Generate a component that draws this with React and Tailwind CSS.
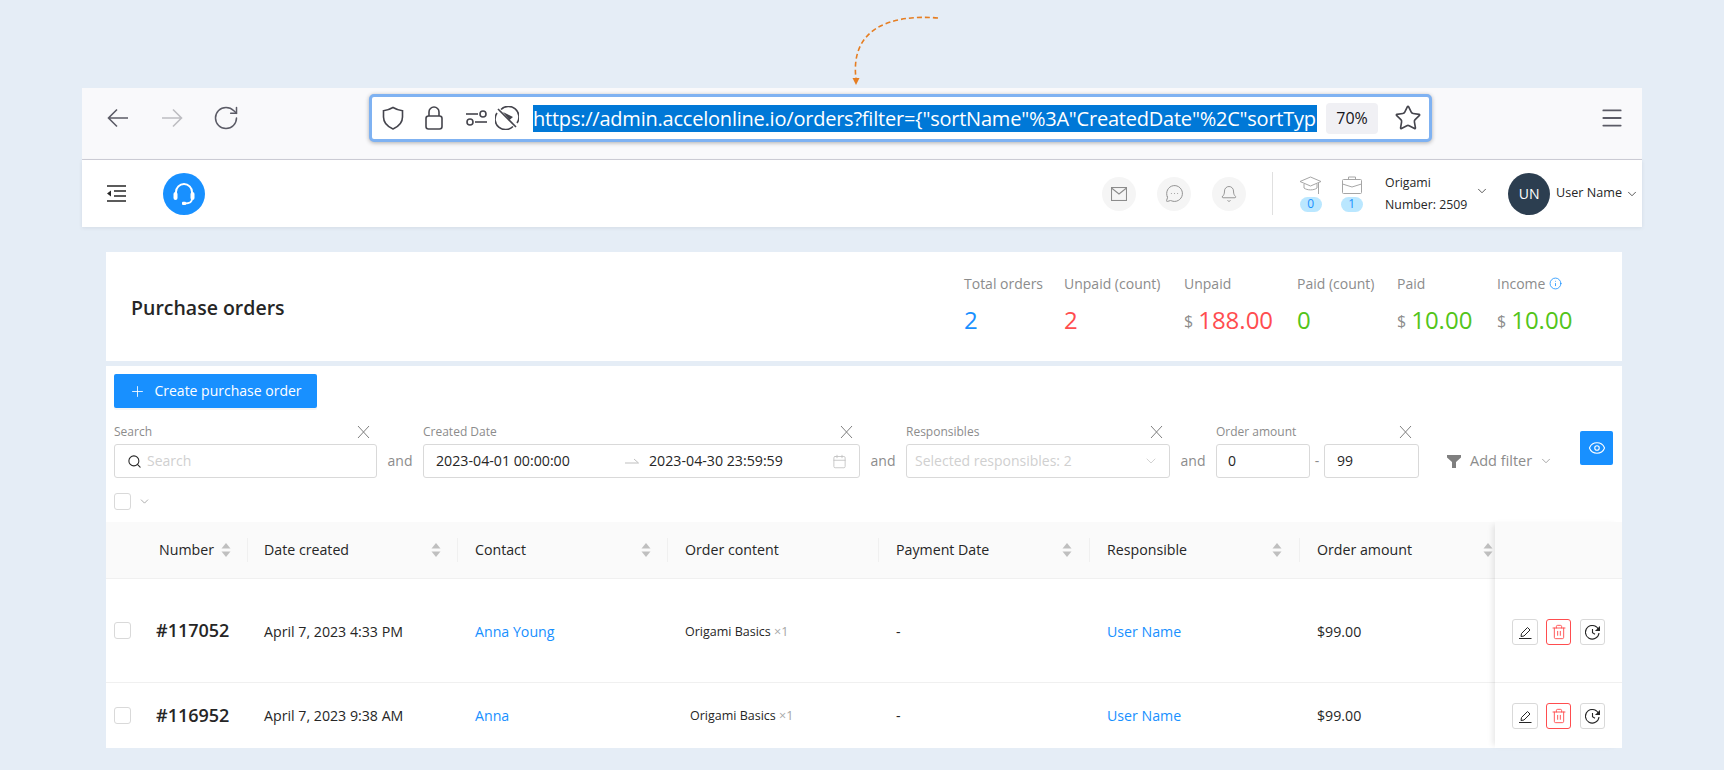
import React from 'react';
import { RotateCw, Star, Search, Calendar, ChevronDown, Plus, Info, Eye, Bell, MessageCircleMore, Menu, Trash2 } from 'lucide-react';

const url = 'https://admin.accelonline.io/orders?filter={"sortName"%3A"CreatedDate"%2C"sortTyp';

const stats = [
  { label: 'Total orders', value: '2', color: 'text-[#1890ff]', w: 'w-[100px]' },
  { label: 'Unpaid (count)', value: '2', color: 'text-[#ff4d4f]', w: 'w-[120px]' },
  { label: 'Unpaid', value: '188.00', money: true, color: 'text-[#ff4d4f]', w: 'w-[113px]' },
  { label: 'Paid (count)', value: '0', color: 'text-[#52c41a]', w: 'w-[100px]' },
  { label: 'Paid', value: '10.00', money: true, color: 'text-[#52c41a]', w: 'w-[100px]' },
  { label: 'Income', value: '10.00', money: true, info: true, color: 'text-[#52c41a]', w: 'w-[125px]' },
];

const columns = [
  { name: 'Number', cls: 'pl-[53px]', near: true },
  { name: 'Date created', cls: 'pl-[16px] pr-[16px]' },
  { name: 'Contact', cls: 'pl-[17px] pr-[16px]' },
  { name: 'Order content', cls: 'pl-[17px]', noSort: true },
  { name: 'Payment Date', cls: 'pl-[17px] pr-[17px]' },
  { name: 'Responsible', cls: 'pl-[17px] pr-[17px]' },
  { name: 'Order amount', cls: 'pl-[17px] pr-[2px]', last: true },
];

const orders = [
  { num: '#117052', date: 'April 7, 2023 4:33 PM', contact: 'Anna Young', offset: 'pl-[17px]', h: 'h-[104px]', pad: 'pt-[3px]' },
  { num: '#116952', date: 'April 7, 2023 9:38 AM', contact: 'Anna', offset: 'pl-[22px]', h: 'h-[65px]', pad: 'pt-[1px]' },
];

const SortArrows = () => (
  <svg width="10" height="16" viewBox="0 0 10 16" className="shrink-0">
    <path d="M5 1 L9.5 6.5 H0.5 Z" fill="#bfbfbf" />
    <path d="M5 15 L9.5 9.5 H0.5 Z" fill="#bfbfbf" />
  </svg>
);

const FilterLabel = ({ text }) => (
  <div className="flex h-6 items-center justify-between pr-[7px] text-xs text-[#8c8c8c]">
    <span>{text}</span>
    <svg width="13" height="14" viewBox="0 0 13 14" fill="none" stroke="#7f7f7f" strokeWidth="1">
      <path d="M1 1l11 12M12 1L1 13" />
    </svg>
  </div>
);

const And = () => (
  <div className="flex h-[34px] w-[46px] items-center justify-center text-sm text-[#8c8c8c]">and</div>
);

const Checkbox = () => (
  <span className="block h-[17px] w-[17px] shrink-0 rounded-[3px] border border-[#d9d9d9] bg-white"></span>
);

export default function App() {
  return (
    <div className="relative h-[770px] w-full overflow-hidden bg-[#e5edf6] pt-[88px] font-['Open_Sans','Noto_Sans',sans-serif] text-[#262626]">
      {/* dashed arrow pointing at the address bar */}
      <svg className="absolute left-0 top-0" width="1000" height="90" viewBox="0 0 1000 90" fill="none">
        <path d="M938 18 C 888 14 850 30 856 79" stroke="#e67e22" strokeWidth="1.6" strokeDasharray="5 3" />
        <path d="M852.5 78 L859.5 78 L856 85 Z" fill="#e67e22" />
      </svg>

      {/* browser bar */}
      <div className="ml-[82px] w-[1560px]">
        <div className="flex h-[72px] items-center border-b border-[#cfcfd8] bg-[#f9f9fb] pb-[11px] pl-[25px] pr-[17px]">
          <svg width="22" height="20" viewBox="0 0 22 20" fill="none" stroke="#5b5b66" strokeWidth="1.6" className="shrink-0">
            <path d="M21 10H2M10 1.500L1.500 10l8.500 8.500" />
          </svg>
          <svg width="22" height="20" viewBox="0 0 22 20" fill="none" stroke="#bdbdc2" strokeWidth="1.6" className="ml-[32px] shrink-0">
            <path d="M1 10h19M12 1.500l8.500 8.500-8.500 8.500" />
          </svg>
          <RotateCw className="ml-[29px] h-[28px] w-[28px] shrink-0 text-[#5b5b66]" strokeWidth={1.3} />
          <div className="ml-[129px] flex h-[48px] w-[1063px] shrink-0 items-center rounded-[5px] border-[3px] border-[#7fb2f2] bg-white pl-[10px] shadow-[0_1px_4px_rgba(0,0,0,0.3)]">
            <svg width="22" height="24" viewBox="0 0 22 24" fill="none" stroke="#45454d" strokeWidth="1.6" className="shrink-0">
              <path d="M11 1.500c3 1.800 6 2.800 9.500 3.200V11c0 5.500-3.800 9.500-9.500 12C5.300 20.500 1.500 16.500 1.500 11V4.700C5 4.300 8 3.300 11 1.500z" />
            </svg>
            <svg width="18" height="24" viewBox="0 0 18 24" fill="none" stroke="#45454d" strokeWidth="1.6" className="ml-[21px] shrink-0">
              <rect x="1" y="10" width="16" height="13" rx="2.500" />
              <path d="M4 10V6a5 5 0 0 1 10 0v4" />
            </svg>
            <svg className="ml-[22px] shrink-0" width="23" height="18" viewBox="0 0 23 18" fill="none" stroke="#45454d" strokeWidth="1.6">
              <path d="M1 5h12" />
              <circle cx="18" cy="5" r="3" />
              <path d="M10 13h12" />
              <circle cx="5" cy="13" r="3" />
            </svg>
            <svg className="ml-[7px] shrink-0" width="24" height="24" viewBox="0 0 24 24" fill="none" stroke="#45454d" strokeWidth="1.6">
              <path d="M6 3.500A10.500 10.500 0 0 1 22 17M18 20.500A10.500 10.500 0 0 1 2 7" />
              <path d="M3 3l18 18" />
              <path d="M8 6l10 5-3.500 3z" fill="#45454d" stroke="none" />
            </svg>
            <div className="ml-[14px] w-[784px] shrink-0 overflow-hidden whitespace-nowrap bg-[#0078d7] text-[20px] leading-[27px] tracking-[-0.22px] text-white">{url}</div>
            <div className="ml-[9px] flex h-[31px] w-[52px] shrink-0 items-center justify-center rounded-[4px] bg-[#f0f0f4] text-base text-[#15141a]">70%</div>
            <Star className="ml-[16px] h-[28px] w-[28px] shrink-0 text-[#45454d]" strokeWidth={1.4} />
          </div>
          <Menu className="ml-auto h-[26px] w-[26px] text-[#5b5b66]" strokeWidth={1.7} />
        </div>

        {/* app header */}
        <div className="flex h-[67px] items-center bg-white pl-[25px] pr-[3px] shadow-[0_1px_4px_rgba(0,21,41,0.08)]">
          <svg width="19" height="17" viewBox="0 0 19 17" fill="none" stroke="#262626" strokeWidth="1.5">
            <path d="M0 1h19M7 6h12M7 11h12M0 16h19" />
            <path d="M4 5.500v6L0 8.500z" fill="#262626" stroke="none" />
          </svg>
          <div className="ml-[37px] flex h-[42px] w-[42px] items-center justify-center rounded-full bg-[#1890ff]">
            <svg width="22" height="23" viewBox="0 0 22 23" fill="none" stroke="white" strokeWidth="2">
              <path d="M3 12V10a8 8 0 0 1 16 0v2" />
              <rect x="0.500" y="10" width="4" height="8" rx="2" fill="white" stroke="none" />
              <rect x="17.500" y="10" width="4" height="8" rx="2" fill="white" stroke="none" />
              <path d="M19 17c0 3.500-2.500 4.500-7 4.500" strokeWidth="1.800" />
              <rect x="9" y="19.800" width="4" height="3.200" rx="1" fill="white" stroke="none" />
            </svg>
          </div>
          <div className="ml-auto flex items-center gap-[21px]">
            <div className="flex h-[34px] w-[34px] items-center justify-center rounded-full bg-[#f5f5f5]">
              <svg width="16" height="14" viewBox="0 0 16 14" fill="none" stroke="#8c8c8c" strokeWidth="1.1">
                <rect x="0.500" y="0.500" width="15" height="13" />
                <path d="M0.500 1l7.500 6 7.500-6" />
              </svg>
            </div>
            <div className="flex h-[34px] w-[34px] items-center justify-center rounded-full bg-[#f5f5f5]">
              <MessageCircleMore className="h-[19px] w-[19px] text-[#8c8c8c]" strokeWidth={1.2} />
            </div>
            <div className="flex h-[34px] w-[34px] items-center justify-center rounded-full bg-[#f5f5f5]">
              <Bell className="h-[18px] w-[18px] text-[#8c8c8c]" strokeWidth={1.2} />
            </div>
          </div>
          <div className="ml-[26px] h-[43px] w-px bg-[#e0e0e0]"></div>
          <div className="ml-[26px] flex w-[23px] flex-col items-center gap-[3px]">
            <svg width="23" height="18" viewBox="0 0 23 18" fill="none" stroke="#a6a6a6" strokeWidth="1">
              <path d="M11.500 1L22 5.500l-10.500 4.500L1 5.500z" />
              <path d="M5 8v4c3 2.500 10 2.500 13 0V8" />
              <path d="M19.500 7v11" />
            </svg>
            <span className="flex h-[15px] w-[22px] items-center justify-center rounded-full bg-[#bae7ff] text-xs text-[#1890ff]">0</span>
          </div>
          <div className="ml-[18px] flex w-[23px] flex-col items-center gap-[3px]">
            <svg width="20" height="18" viewBox="0 0 20 18" fill="none" stroke="#a6a6a6" strokeWidth="1">
              <rect x="0.500" y="3.500" width="19" height="14" rx="1" />
              <path d="M6.500 3.500V1h7v2.500M0.500 8l9.500 3 9.500-3" />
            </svg>
            <span className="flex h-[15px] w-[22px] items-center justify-center rounded-full bg-[#bae7ff] text-xs text-[#1890ff]">1</span>
          </div>
          <div className="ml-[22px] flex w-[90px] flex-col gap-[4px] text-[12.3px] leading-[18px] text-[#262626]">
            <span>Origami</span>
            <span className="whitespace-nowrap">Number: 2509</span>
          </div>
          <ChevronDown className="h-[14px] w-[14px] -translate-y-[3px] text-[#262626]" strokeWidth={1.3} />
          <div className="ml-[19px] flex h-[42px] w-[42px] items-center justify-center rounded-full bg-[#2c3e50] text-sm text-white">UN</div>
          <span className="ml-[6px] whitespace-nowrap text-[12.6px] text-[#262626]">User Name</span>
          <ChevronDown className="ml-[3px] h-[14px] w-[14px] text-[#262626]" strokeWidth={1.3} />
        </div>
      </div>

      {/* stats card */}
      <div className="ml-[106px] mt-[25px] flex h-[109px] w-[1516px] items-center bg-white pb-[4px] pl-[25px]">
        <h1 className="flex-1 pt-[7px] text-[19.5px] font-semibold text-[#262626]">Purchase orders</h1>
        {stats.map((s) => (
          <div key={s.label} className={`${s.w} flex flex-col gap-[10px]`}>
            <div className="flex h-5 items-center gap-1 whitespace-nowrap text-sm text-[#8c8c8c]">
              {s.label}
              {s.info && <Info className="h-[13px] w-[13px] text-[#1890ff]" strokeWidth={1.5} />}
            </div>
            <div className={`flex h-8 items-center gap-[5px] text-2xl ${s.color}`}>
              {s.money && <span className="mt-[3px] text-base text-[#8c8c8c]">$</span>}
              <span>{s.value}</span>
            </div>
          </div>
        ))}
      </div>

      {/* orders card */}
      <div className="ml-[106px] mt-[5px] w-[1516px] bg-white pt-2">
        <div className="pl-2">
          <button className="flex h-[34px] w-[203px] items-center justify-center gap-[8px] rounded-[2px] bg-[#1890ff] text-sm text-white shadow-[0_2px_0_rgba(0,0,0,0.04)]">
            <Plus className="h-[17px] w-[17px]" strokeWidth={1.2} />
            Create purchase order
          </button>
        </div>

        {/* filters */}
        <div className="mt-3 flex items-start pl-2">
          <div className="w-[263px]">
            <FilterLabel text="Search" />
            <div className="flex h-[34px] items-center gap-[5px] rounded-[3px] border border-[#d9d9d9] px-[12px] text-sm text-[#d0d0d0]">
              <Search className="h-[15px] w-[15px] text-[#262626]" strokeWidth={1.7} />
              Search
            </div>
          </div>
          <div className="pt-6"><And /></div>
          <div className="w-[437px]">
            <FilterLabel text="Created Date" />
            <div className="flex h-[34px] items-center rounded-[3px] border border-[#d9d9d9] pl-[12px] pr-[12px] text-[14.2px] text-[#262626]">
              <span className="w-[189px] whitespace-nowrap">2023-04-01 00:00:00</span>
              <svg width="14" height="6" viewBox="0 0 14 6" fill="none" stroke="#bfbfbf" strokeWidth="1" className="shrink-0">
                <path d="M0 5h13.500L9 1" />
              </svg>
              <span className="ml-[10px] whitespace-nowrap">2023-04-30 23:59:59</span>
              <Calendar className="ml-auto h-[15px] w-[15px] text-[#bfbfbf]" strokeWidth={1.3} />
            </div>
          </div>
          <div className="pt-6"><And /></div>
          <div className="w-[264px]">
            <FilterLabel text="Responsibles" />
            <div className="flex h-[34px] items-center justify-between rounded-[3px] border border-[#d9d9d9] pl-[8px] pr-[10px] text-sm text-[#d0d0d0]">
              Selected responsibles: 2
              <ChevronDown className="h-[16px] w-[16px] text-[#c8c8c8]" strokeWidth={1.2} />
            </div>
          </div>
          <div className="pt-6"><And /></div>
          <div className="w-[203px]">
            <FilterLabel text="Order amount" />
            <div className="flex items-center text-sm text-[#262626]">
              <div className="flex h-[34px] w-[94px] items-center rounded-[3px] border border-[#d9d9d9] pl-[11px]">0</div>
              <span className="w-[14px] text-center text-[#8c8c8c]">-</span>
              <div className="flex h-[34px] w-[95px] items-center rounded-[3px] border border-[#d9d9d9] pl-[12px]">99</div>
            </div>
          </div>
          <div className="ml-[28px] mt-6 flex h-[34px] items-center text-[14.5px] text-[#8c8c8c]">
            <svg width="14" height="13" viewBox="0 0 14 13" className="shrink-0">
              <path d="M0 0h14v2.500L9 7v6H5V7L0 2.500z" fill="#7f7f7f" />
            </svg>
            <span className="ml-[9px] whitespace-nowrap">Add filter</span>
            <ChevronDown className="ml-[7px] h-[14px] w-[14px]" strokeWidth={1.3} />
          </div>
          <button className="ml-auto mr-[9px] mt-[11px] flex h-[34px] w-[33px] items-center justify-center rounded-[2px] bg-[#1890ff] text-white">
            <Eye className="h-[18px] w-[18px]" strokeWidth={1.5} />
          </button>
        </div>

        <div className="mt-[15px] flex h-[17px] items-center gap-[7px] pl-2">
          <Checkbox />
          <ChevronDown className="h-[13px] w-[13px] text-[#8c8c8c]" strokeWidth={1.3} />
        </div>

        {/* table */}
        <div className="mt-3 flex">
          <div className="w-[1389px] shrink-0">
            <div className="grid h-[57px] grid-cols-[142px_210px_210px_211px_211px_210px_195px] border-b border-[#f0f0f0] bg-[#fafafa] text-[14.2px] text-[#262626]">
              {columns.map((c) => (
                <div key={c.name} className="flex items-center">
                  <div className={`flex h-6 flex-1 items-center ${c.near ? 'gap-[7px]' : 'justify-between'} ${c.cls} ${c.last ? '' : 'border-r border-[#f0f0f0]'}`}>
                    <span className="whitespace-nowrap">{c.name}</span>
                    {!c.noSort && <SortArrows />}
                  </div>
                </div>
              ))}
            </div>
            {orders.map((o, i) => (
              <div key={o.num} className={`grid ${o.h} grid-cols-[142px_210px_210px_211px_211px_210px_195px] items-center text-[14.2px] text-[#262626] ${i === 0 ? 'border-b border-[#f0f0f0]' : ''}`}>
                <div className="flex items-center gap-[25px] pl-2">
                  <Checkbox />
                  <span className="whitespace-nowrap text-[18px] font-semibold">{o.num}</span>
                </div>
                <div className={`whitespace-nowrap pl-[16px] ${o.pad}`}>{o.date}</div>
                <div className={`pl-[17px] text-[#1890ff] ${o.pad}`}>{o.contact}</div>
                <div className={`${o.offset} whitespace-nowrap text-[12.5px] ${o.pad}`}>
                  Origami Basics <span className="text-[#a6a6a6]">×1</span>
                </div>
                <div className={`pl-[17px] ${o.pad}`}>-</div>
                <div className={`pl-[17px] text-[#1890ff] ${o.pad}`}>User Name</div>
                <div className={`pl-[17px] ${o.pad}`}>$99.00</div>
              </div>
            ))}
          </div>

          {/* fixed actions column */}
          <div className="z-10 w-[127px] shrink-0 bg-white shadow-[-5px_0_6px_-3px_rgba(0,0,0,0.1)]">
            <div className="h-[57px] border-b border-[#f0f0f0] bg-[#fafafa]"></div>
            {orders.map((o, i) => (
              <div key={o.num} className={`flex ${o.h} items-center gap-2 pl-[17px] ${o.pad} ${i === 0 ? 'border-b border-[#f0f0f0]' : ''}`}>
                <button className="flex h-[26px] w-[26px] items-center justify-center rounded-[3px] border border-[#d9d9d9] bg-white">
                  <svg width="14" height="14" viewBox="0 0 14 14" fill="none" stroke="#262626" strokeWidth="1">
                    <path d="M1 13.500h12.500" />
                    <path d="M3 11.500l.5-3L9.500 2.500l2.500 2.500-6 6z" />
                  </svg>
                </button>
                <button className="flex h-[26px] w-[25px] items-center justify-center rounded-[3px] border border-[#ff4d4f] bg-white">
                  <Trash2 className="h-[16px] w-[16px] text-[#ff4d4f]" strokeWidth={1.4} />
                </button>
                <button className="ml-[1px] flex h-[26px] w-[25px] items-center justify-center rounded-[3px] border border-[#d9d9d9] bg-white">
                  <svg width="15" height="15" viewBox="0 0 15 15" fill="none" stroke="#262626" strokeWidth="1.1">
                    <path d="M13.800 5.500A6.800 6.800 0 1 0 14 8" />
                    <path d="M14.500 1.500v4h-4" fill="#262626" />
                    <path d="M7.500 4v3.800l2.500 1.500" />
                  </svg>
                </button>
              </div>
            ))}
          </div>
        </div>
      </div>
    </div>
  );
}
